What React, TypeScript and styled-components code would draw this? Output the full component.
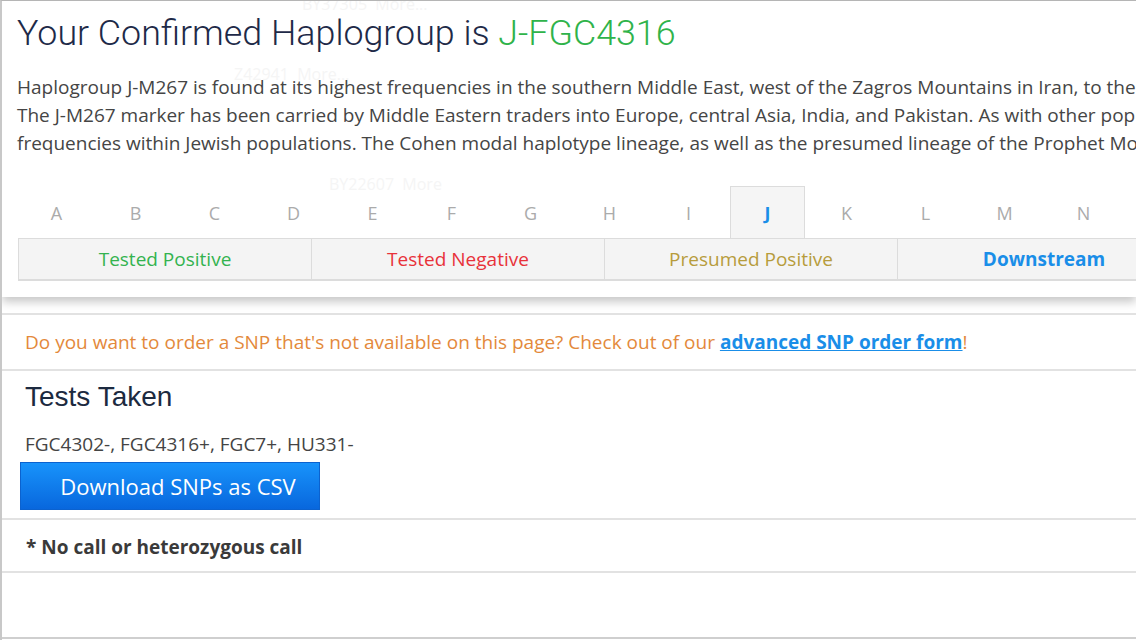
import styled, { createGlobalStyle } from 'styled-components';

const GlobalStyle = createGlobalStyle`
  html, body { margin: 0; padding: 0; background: #fff; }
  body { width: 1136px; height: 640px; overflow: hidden; font-family: "Open Sans", "Liberation Sans", sans-serif; }
`;

const letters = ['A', 'B', 'C', 'D', 'E', 'F', 'G', 'H', 'I', 'J', 'K', 'L', 'M', 'N'];

const statuses = [
    { label: 'Tested Positive', color: '#33b34f', bold: false },
    { label: 'Tested Negative', color: '#e8323a', bold: false },
    { label: 'Presumed Positive', color: '#b79c3c', bold: false },
    { label: 'Downstream', color: '#1a8ee8', bold: true },
];

const description = [
    'Haplogroup J-M267 is found at its highest frequencies in the southern Middle East, west of the Zagros Mountains in Iran, to the north',
    'The J-M267 marker has been carried by Middle Eastern traders into Europe, central Asia, India, and Pakistan. As with other populations',
    'frequencies within Jewish populations. The Cohen modal haplotype lineage, as well as the presumed lineage of the Prophet Mohammed',
];

// faint tree nodes showing through the overlay card
const ghosts = [
    { text: 'BY37305  More...', x: 300, y: -8 },
    { text: 'Z42941  More...', x: 232, y: 62 },
    { text: 'BY22607  More', x: 327, y: 172 },
];

export default function App() {
    return (
        <Page>
            <GlobalStyle />
            <Card>
                <GhostLayer>
                    {ghosts.map((g, i) => <Ghost key={i} style={{ left: g.x, top: g.y }}>{g.text}</Ghost>)}
                </GhostLayer>
                <Title>Your Confirmed Haplogroup is <Green>J-FGC4316</Green></Title>
                <Description>
                    {description.map((line, i) => <Line key={i}>{line}</Line>)}
                </Description>
                <TabRow>
                    {letters.map(l => <Tab key={l} active={l === 'J'}>{l}</Tab>)}
                </TabRow>
                <StatusBar>
                    {statuses.map(s => <StatusCell key={s.label} color={s.color} bold={s.bold}>{s.label}</StatusCell>)}
                </StatusBar>
            </Card>
            <OrderSection>
                Do you want to order a SNP that's not available on this page? Check out of our{' '}
                <OrderLink href="#">advanced SNP order form</OrderLink>!
            </OrderSection>
            <TestsSection>
                <SectionTitle>Tests Taken</SectionTitle>
                <Codes>FGC4302-, FGC4316+, FGC7+, HU331-</Codes>
                <DownloadButton>Download SNPs as CSV</DownloadButton>
            </TestsSection>
            <NoteSection>* No call or heterozygous call</NoteSection>
            <Filler />
        </Page>
    );
}

const Page = styled.div`
width: 1136px;
height: 640px;
border-top: 1px solid #b5b5b5;
border-left: 2px solid #c8c8c8;
box-sizing: border-box;
display: flex;
flex-direction: column;
overflow: hidden;
position: relative;
`;
const Card = styled.div`
position: relative;
height: 296px;
flex-shrink: 0;
padding-left: 15px;
background: #fff;
box-shadow: 0 5px 9px rgba(0,0,0,0.22);
z-index: 1;
overflow: hidden;
`;
const GhostLayer = styled.div`
position: absolute;
inset: 0;
pointer-events: none;
`;
const Ghost = styled.span`
position: absolute;
font-size: 16px;
color: #f5f5f5;
white-space: pre;
`;
const Title = styled.h1`
position: relative;
margin: 0;
padding-top: 12px;
font-family: Roboto, "Liberation Sans", sans-serif;
font-weight: 300;
font-size: 35.8px;
line-height: 40px;
color: #1e2a48;
white-space: nowrap;
`;
const Green = styled.span`
color: #2fb34a;
`;
const Description = styled.div`
position: relative;
margin-top: 20px;
font-size: 19px;
line-height: 28px;
color: #454545;
`;
const Line = styled.div`
white-space: nowrap;
`;
const TabRow = styled.div`
position: relative;
display: flex;
margin-top: 29px;
height: 52px;
`;
const Tab = styled.div<{ active?: boolean }>`
width: 75px;
margin: 0 2px;
flex-shrink: 0;
box-sizing: border-box;
display: flex;
align-items: center;
justify-content: center;
font-size: 18px;
color: ${p => p.active ? '#1a8ee8' : '#ababab'};
font-weight: ${p => p.active ? 700 : 400};
background: ${p => p.active ? '#f5f5f5' : 'transparent'};
border: 1px solid ${p => p.active ? '#dcdcdc' : 'transparent'};
border-bottom: none;
`;
const StatusBar = styled.div`
position: relative;
display: grid;
grid-template-columns: repeat(4, 293px);
margin-left: 1px;
height: 43px;
background: #f4f4f4;
border-top: 1px solid #dcdcdc;
border-bottom: 2px solid #dcdcdc;
border-left: 1px solid #dcdcdc;
box-sizing: border-box;
`;
const StatusCell = styled.div<{ color: string; bold?: boolean }>`
display: flex;
align-items: center;
justify-content: center;
border-right: 1px solid #dcdcdc;
font-size: 19px;
color: ${p => p.color};
font-weight: ${p => p.bold ? 700 : 400};
`;
const OrderSection = styled.div`
margin-top: 16px;
height: 54px;
flex-shrink: 0;
border-top: 2px solid #e2e2e2;
border-bottom: 2px solid #e2e2e2;
padding-left: 23px;
display: flex;
align-items: center;
font-size: 19px;
color: #e3893b;
white-space: pre;
`;
const OrderLink = styled.a`
color: #1a8ee8;
font-weight: 700;
text-decoration: underline;
`;
const TestsSection = styled.div`
height: 149px;
flex-shrink: 0;
padding: 10px 0 0 18px;
box-sizing: border-box;
border-bottom: 2px solid #e2e2e2;
`;
const SectionTitle = styled.h2`
margin: 0 0 0 5px;
font-family: "Liberation Sans", Arial, sans-serif;
font-weight: 400;
font-size: 28px;
line-height: 32px;
color: #1c2a40;
`;
const Codes = styled.div`
margin: 19px 0 0 5px;
font-size: 19px;
line-height: 24px;
color: #444;
`;
const DownloadButton = styled.button`
margin-top: 6px;
width: 300px;
height: 48px;
border: 1px solid #0b62cf;
background: linear-gradient(#1893fb, #0867dd);
color: #fff;
font-family: "Open Sans", sans-serif;
font-size: 22px;
padding: 0 0 0 16px;
`;
const NoteSection = styled.div`
height: 53px;
flex-shrink: 0;
border-bottom: 2px solid #e2e2e2;
padding: 2px 0 0 24px;
box-sizing: border-box;
display: flex;
align-items: center;
font-size: 19px;
font-weight: 700;
color: #3a3a3a;
`;
const Filler = styled.div`
height: 64px;
flex-shrink: 0;
border-bottom: 2px solid #cfcfcf;
`;
